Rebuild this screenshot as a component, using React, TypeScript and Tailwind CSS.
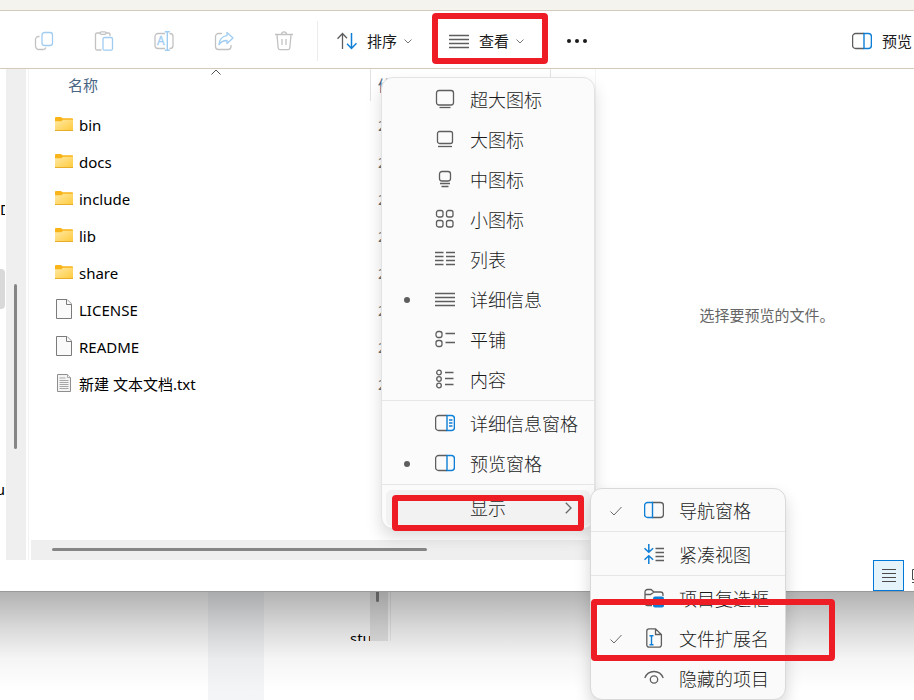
import { FC, ReactNode } from "react"

const GREY = "#5e5e5e"
const BLUE = "#0f7fd6"
const FAINT_GREY = "#c2c2c2"
const FAINT_BLUE = "#a0ccf1"

const Icon: FC<{ children: ReactNode }> = ({ children }) => (
	<svg
		viewBox="0 0 20 20"
		fill="none"
		stroke={GREY}
		strokeWidth="1.3"
		className="h-5 w-5 shrink-0"
		aria-hidden="true"
	>
		{children}
	</svg>
)

const CopyIcon = () => (
	<Icon>
		<path
			stroke={FAINT_GREY}
			d="M5.5 5.5h-1a3 3 0 0 0-3 3V15A3.5 3.5 0 0 0 5 18.5h4a3 3 0 0 0 3-2"
		/>
		<rect stroke={FAINT_BLUE} x="8" y="1.5" width="10.5" height="13" rx="2.5" />
	</Icon>
)

const PasteIcon = () => (
	<Icon>
		<path
			stroke={FAINT_GREY}
			d="M6 2H3a1.5 1.5 0 0 0-1.5 1.5v14A1.5 1.5 0 0 0 3 19h4.5M12 2h2.5A1.5 1.5 0 0 1 16 3.5V5"
		/>
		<rect stroke={FAINT_GREY} x="6" y=".8" width="6" height="2.6" rx="1.3" />
		<rect stroke={FAINT_BLUE} x="9" y="6.5" width="9.5" height="12.7" rx="1.5" />
	</Icon>
)

const RenameIcon = () => (
	<Icon>
		<path
			stroke={FAINT_GREY}
			d="M11 2.5H4a3 3 0 0 0-3 3v9a3 3 0 0 0 3 3h7M15.5 2.5h.5a3 3 0 0 1 3 3v9a3 3 0 0 1-3 3h-.5"
		/>
		<path stroke={FAINT_BLUE} strokeWidth="1.4" d="M13.3 1v18M10.8.8h5M10.8 19.2h5" />
		<text x="3" y="14" fontSize="12" fill={FAINT_BLUE} stroke={FAINT_BLUE} strokeWidth=".3">
			A
		</text>
	</Icon>
)

const ShareIcon = () => (
	<Icon>
		<path
			stroke={FAINT_GREY}
			d="M8 2.5H4.5a3 3 0 0 0-3 3v10a3 3 0 0 0 3 3H14a3 3 0 0 0 3-3V14"
		/>
		<path
			stroke={FAINT_BLUE}
			strokeLinejoin="round"
			d="M13 1.500l6 5.500-6 5.500V9.500c-4 0-6.500 1.500-8 4.300C5 9 8 5 13 4.700z"
		/>
	</Icon>
)

const TrashIcon = () => (
	<Icon>
		<path
			stroke={FAINT_GREY}
			d="M1 3.5h18M7.5 3.2c0-3 5-3 5 0M3 4l1.2 13A1.8 1.8 0 0 0 6 18.6h8a1.8 1.8 0 0 0 1.8-1.6L17 4M8 8v6M12 8v6"
		/>
	</Icon>
)

const SortIcon = () => (
	<Icon>
		<path d="M5.5 2.5V18M.5 7.8l5-5.300 4.500 4.700" />
		<path stroke={BLUE} strokeWidth="1.5" d="M14.5 2v15.5M10 12.8l4.500 4.700 5-5.300" />
	</Icon>
)

const LinesIcon = () => (
	<Icon>
		<path d="M0 4.5h20M0 8.5h20M0 12.5h20M0 16.5h20" />
	</Icon>
)

const PaneIcon: FC<{ detailed?: boolean }> = ({ detailed }) => (
	<Icon>
		<path d="M12 2.5H3.6a3 3 0 0 0-3 3v9a3 3 0 0 0 3 3H12" />
		<path stroke={BLUE} strokeWidth="1.4" d="M12 2.5h4.400a3 3 0 0 1 3 3v9a3 3 0 0 1-3 3H12z" />
		{detailed && <path stroke={BLUE} d="M14 7h3.500M14 10h3.500M14 13h3.500" />}
	</Icon>
)

const NavPaneIcon = () => (
	<Icon>
		<path d="M8 2.5h8.400a3 3 0 0 1 3 3v9a3 3 0 0 1-3 3H8" />
		<path stroke={BLUE} strokeWidth="1.4" d="M8.5 2.5H3.6a3 3 0 0 0-3 3v9a3 3 0 0 0 3 3h4.900z" />
	</Icon>
)

const ExtraLargeIcon = () => (
	<Icon>
		<rect x="1.5" y="1.5" width="17" height="14.5" rx="2.5" />
		<path d="M4.5 18.5h11" />
	</Icon>
)

const LargeIcon = () => (
	<Icon>
		<rect x="2.5" y="2.5" width="15" height="12" rx="2" />
		<path d="M3 17.500h14" />
	</Icon>
)

const MediumIcon = () => (
	<Icon>
		<rect x="4.5" y="2.5" width="11" height="9.5" rx="2.5" />
		<path d="M5 14.5h10M6.5 17.5h7" />
	</Icon>
)

const SmallIcon = () => (
	<Icon>
		<rect x="1.5" y="1.5" width="6.5" height="6.5" rx="2" />
		<rect x="11.5" y="1.5" width="6.5" height="6.5" rx="2" />
		<rect x="1.5" y="11.5" width="6.5" height="6.5" rx="2" />
		<rect x="11.5" y="11.5" width="6.5" height="6.5" rx="2" />
	</Icon>
)

const ListIcon = () => (
	<Icon>
		<path d="M0 3.5h8.500M11 3.5h9M0 7.5h8.500M11 7.5h9M0 11.5h8.500M11 11.5h9M0 15.5h8.500M11 15.5h9" />
	</Icon>
)

const TilesIcon = () => (
	<Icon>
		<rect x="1" y="2.5" width="6" height="6" rx="2.2" />
		<rect x="1" y="11.5" width="6" height="6" rx="2.2" />
		<path d="M10.5 4.5H20M10.5 13.5H20" />
	</Icon>
)

const ContentIcon = () => (
	<Icon>
		<circle cx="4" cy="3.5" r="2.3" />
		<circle cx="4" cy="10" r="2.3" />
		<circle cx="4" cy="16.5" r="2.3" />
		<path d="M10 3.500h8.500M10 9.500h8.500M10 15.500h8.500" />
	</Icon>
)

const CompactIcon = () => (
	<Icon>
		<path
			stroke={BLUE}
			strokeWidth="1.5"
			d="M4.8 0v8M.5 4.2l4.300 4 4.300-4M4.8 20v-8M.5 15.800l4.300-4 4.300 4"
		/>
		<path d="M11.5 4.5H20M11.5 8.5H20M11.5 12.5H20M11.5 16.5H20" />
	</Icon>
)

const CheckFolderIcon = () => (
	<Icon>
		<path d="M8 17.5H3.500A2.500 2.500 0 0 1 1 15V4a2.500 2.500 0 0 1 2.500-2.500H7L10 4h6.500A2.500 2.500 0 0 1 19 6.500V8M1 6.500h5.500L10 4" />
		<rect x="9" y="8.500" width="11" height="11" rx="2" fill={BLUE} stroke="none" />
		<path stroke="#fff" d="M11.5 14l2 2 4-4" />
	</Icon>
)

const ExtensionIcon = () => (
	<Icon>
		<path d="M11.5.8H5A2.2 2.2 0 0 0 2.8 3v14A2.2 2.2 0 0 0 5 19.2h10.200a2.200 2.200 0 0 0 2.200-2.200V6.500zM11.5.8v5.700h5.900" />
		<path stroke={BLUE} strokeWidth="1.4" d="M7.5 8v8.500M5.5 7.800h4M5.5 16.700h4" />
	</Icon>
)

const HiddenIcon = () => (
	<Icon>
		<path d="M.8 10C2.5 5.5 6 3.5 10 3.5s7.500 2 9.200 6.500" />
		<circle cx="10" cy="11.5" r="3.7" />
	</Icon>
)

const Chevron = () => (
	<svg viewBox="0 0 8 5" fill="none" stroke="#777" className="h-[5px] w-2" aria-hidden="true">
		<path d="M.5.5L4 4 7.5.5" />
	</svg>
)

const FolderIcon = () => (
	<svg viewBox="0 0 18 14" className="h-3.5 w-[18px]" aria-hidden="true">
		<defs>
			<linearGradient id="folder" x1="0" y1="0" x2="1" y2="1">
				<stop offset="0" stopColor="#ffe9a6" />
				<stop offset="1" stopColor="#ffca3a" />
			</linearGradient>
		</defs>
		<path d="M0 1a1 1 0 0 1 1-1h5l1.500 1.300H17a1 1 0 0 1 1 1V5H0z" fill="#f8b418" />
		<path d="M0 4.300h6.500L8 2.800h10V13a1 1 0 0 1-1 1H1a1 1 0 0 1-1-1z" fill="url(#folder)" />
		<path d="M0 13.500h18" stroke="#e9ad2c" />
	</svg>
)

const FileIcon = () => (
	<svg viewBox="0 0 16 20" fill="#fafafa" stroke="#7b7b7b" className="h-5 w-4" aria-hidden="true">
		<path d="M.5.5H11L15.5 5v14.500H.5z" />
		<path d="M10.5.5v5h5" />
	</svg>
)

const TextFileIcon = () => (
	<svg viewBox="0 0 16 20" fill="#f4f4f4" stroke="#8e8e8e" className="h-5 w-4" aria-hidden="true">
		<path d="M1.5 1.5h10l3 3v14h-13z" />
		<path
			stroke="#a8a8a8"
			d="M11.5 1.500v3h3M3.500 5h6M3.500 7.500h9M3.500 9.500h9M3.500 11.500h9M3.500 13.500h9M3.500 15.500h9"
		/>
	</svg>
)

const TOOLS = [
	{ label: "复制", icon: <CopyIcon /> },
	{ label: "粘贴", icon: <PasteIcon /> },
	{ label: "重命名", icon: <RenameIcon /> },
	{ label: "共享", icon: <ShareIcon /> },
	{ label: "删除", icon: <TrashIcon /> },
]

const FILES = [
	{ name: "bin", icon: <FolderIcon /> },
	{ name: "docs", icon: <FolderIcon /> },
	{ name: "include", icon: <FolderIcon /> },
	{ name: "lib", icon: <FolderIcon /> },
	{ name: "share", icon: <FolderIcon /> },
	{ name: "LICENSE", icon: <FileIcon /> },
	{ name: "README", icon: <FileIcon /> },
	{ name: "新建 文本文档.txt", icon: <TextFileIcon /> },
]

type MenuItemProps = {
	label: string
	icon?: ReactNode
	mark?: "dot" | "check"
	open?: boolean
	children?: ReactNode
}

const MenuItem: FC<MenuItemProps> = ({ label, icon, mark, open, children }) => (
	<li className="relative h-10 px-1 py-0.5">
		<button
			type="button"
			className={`flex h-9 w-full items-center rounded-md pr-[18px] pl-[15px] text-left ${open ? "bg-[#f2f2f2]" : ""}`}
		>
			<span className="flex w-3 shrink-0 justify-center">
				{mark === "dot" && <span className="h-1.5 w-1.5 rounded-full bg-[#5e5e5e]" />}
				{mark === "check" && (
					<svg viewBox="0 0 12 10" fill="none" stroke="#6a6a6a" className="h-2.5 w-3">
						<path d="M.5 5.500L4 9l7.500-8" />
					</svg>
				)}
			</span>
			<span className="mr-[15px] mb-0.5 ml-[22px] h-5 w-5 shrink-0">{icon}</span>
			<span className="whitespace-nowrap">{label}</span>
			{open && (
				<svg
					viewBox="0 0 7 12"
					fill="none"
					stroke="#666"
					strokeWidth="1.3"
					className="ml-auto h-3 w-[7px]"
				>
					<path d="M.8.8L6 6 .8 11.200" />
				</svg>
			)}
		</button>
		{children}
	</li>
)

const Separator = () => <li role="separator" className="mb-[3px] h-px bg-[#e6e6e6]" />

const ViewMenu = () => (
	<ul className="absolute top-[77px] left-[381px] z-10 w-[214px] rounded-xl border border-[#e2e3e5] bg-[#fbfbfc] pt-0.5 text-lg leading-6 font-light text-[#1b1b1b] shadow-[0_8px_16px_rgba(0,0,0,0.14)]">
		<MenuItem label="超大图标" icon={<ExtraLargeIcon />} />
		<MenuItem label="大图标" icon={<LargeIcon />} />
		<MenuItem label="中图标" icon={<MediumIcon />} />
		<MenuItem label="小图标" icon={<SmallIcon />} />
		<MenuItem label="列表" icon={<ListIcon />} />
		<MenuItem label="详细信息" icon={<LinesIcon />} mark="dot" />
		<MenuItem label="平铺" icon={<TilesIcon />} />
		<MenuItem label="内容" icon={<ContentIcon />} />
		<Separator />
		<MenuItem label="详细信息窗格" icon={<PaneIcon detailed />} />
		<MenuItem label="预览窗格" icon={<PaneIcon />} mark="dot" />
		<Separator />
		<MenuItem label="显示" open>
			<ul className="absolute top-0 left-[208px] w-[196px] rounded-xl border border-[#d9d9d9] bg-[#fafafa] pt-0.5 shadow-[0_8px_16px_rgba(0,0,0,0.16)]">
				<MenuItem label="导航窗格" icon={<NavPaneIcon />} mark="check" />
				<Separator />
				<MenuItem label="紧凑视图" icon={<CompactIcon />} />
				<Separator />
				<MenuItem label="项目复选框" icon={<CheckFolderIcon />} />
				<MenuItem label="文件扩展名" icon={<ExtensionIcon />} mark="check" />
				<MenuItem label="隐藏的项目" icon={<HiddenIcon />} />
			</ul>
		</MenuItem>
	</ul>
)

const Toolbar = () => (
	<header className="shrink-0 border-b border-[#d5cabb] bg-white">
		<div className="h-[11px] border-b border-[#d5cabb] bg-[#f5f3ee]" />
		<div className="flex h-[57px] items-center pt-[3px] pr-0.5 pl-6 text-[15px] leading-5 text-[#1b1b1b]">
			<div className="flex gap-5">
				{TOOLS.map((tool) => (
					<button
						key={tool.label}
						type="button"
						disabled
						aria-label={tool.label}
						className="flex w-10 justify-center"
					>
						{tool.icon}
					</button>
				))}
			</div>
			<div className="ml-[13px] h-10 w-px bg-[#ececec]" />
			<button type="button" className="ml-[19px] flex items-center">
				<SortIcon />
				<span className="mr-[7px] ml-2.5">排序</span>
				<Chevron />
			</button>
			<button type="button" className="ml-[37px] flex items-center">
				<LinesIcon />
				<span className="mr-[7px] ml-2.5">查看</span>
				<Chevron />
			</button>
			<button type="button" aria-label="更多" className="ml-[43px] flex gap-1">
				<span className="h-1 w-1 rounded-full bg-[#1b1b1b]" />
				<span className="h-1 w-1 rounded-full bg-[#1b1b1b]" />
				<span className="h-1 w-1 rounded-full bg-[#1b1b1b]" />
			</button>
			<button type="button" className="ml-auto flex items-center gap-2.5">
				<PaneIcon />
				<span>预览</span>
			</button>
		</div>
	</header>
)

const NavEdge = () => (
	<nav className="flex shrink-0 border-r border-[#f3f3f3] pr-0.5 text-[15px] leading-5">
		<div className="mr-px w-[5px] overflow-hidden pt-[130px]">
			<p>D</p>
			<div className="mt-[50px] h-10 rounded-r-sm bg-[#d9d9d9]" />
			<p className="mt-[170px] flex justify-end">u</p>
		</div>
		<div className="w-5 bg-[#efefef] pt-[215px] pl-2">
			<div className="h-[165px] w-[3px] rounded-full bg-[#868686]" />
		</div>
	</nav>
)

const FileList = () => (
	<section className="ml-0.5 flex w-[564px] shrink-0 flex-col">
		<table className="w-full table-fixed text-left text-[15px] leading-5">
			<colgroup>
				<col className="w-[339px]" />
				<col className="w-[180px]" />
				<col />
			</colgroup>
			<thead>
				<tr className="h-[37px] text-[#4a6484]">
					<th className="relative p-0 pl-[37px] align-top font-normal">
						<svg
							viewBox="0 0 10 6"
							fill="none"
							stroke="#555"
							className="absolute top-0 left-[180px] h-1.5 w-2.5"
						>
							<path d="M.5 5.500L5 1l4.500 4.500" />
						</svg>
						<div className="pt-1.5">名称</div>
					</th>
					<th className="p-0 align-top font-normal">
						<div className="h-8 border-l border-[#e2e2e2] pt-1.5 pl-[7px]">修改日期</div>
					</th>
					<th className="p-0 align-top font-normal">
						<div className="h-8 border-l border-[#e2e2e2]" />
					</th>
				</tr>
			</thead>
			<tbody>
				{FILES.map((file) => (
					<tr key={file.name} className="h-[37px]">
						<td className="p-0 pl-6">
							<div className="flex items-center gap-1.5">
								<span className="flex w-[18px] justify-center pb-0.5">{file.icon}</span>
								<span>{file.name}</span>
							</div>
						</td>
						<td className="p-0 pl-2 text-[#6d6d6d]">2</td>
						<td className="p-0" />
					</tr>
				))}
			</tbody>
		</table>
		<div className="mt-auto h-5 bg-[#efefef] pt-2 pl-[21px]">
			<div className="h-[3px] w-[375px] rounded-full bg-[#868686]" />
		</div>
	</section>
)

const StatusBar = () => (
	<footer className="flex h-8 shrink-0 justify-end overflow-hidden border-b border-[#9a9a9a] bg-white">
		<button
			type="button"
			aria-label="详细信息视图"
			className="flex w-[31px] items-center justify-center border border-[#0078d7] bg-[#e5f3fb]"
		>
			<svg viewBox="0 0 14 14" stroke="#4a4a4a" className="h-3.5 w-3.5">
				<path d="M0 .5h14M0 4.500h14M0 8.500h14M0 12.500h14" />
			</svg>
		</button>
		<button type="button" aria-label="缩略图视图" className="flex w-2.5 items-center overflow-hidden pl-2">
			<svg viewBox="0 0 14 14" fill="none" stroke="#4a4a4a" className="h-3.5 w-3.5 shrink-0">
				<path d="M.5.5h13v10H.5zM0 13.500h14" />
			</svg>
		</button>
	</footer>
)

// window behind the explorer, darkened by its drop shadow
const Backdrop = () => (
	<div className="relative flex h-[108px] shrink-0 overflow-hidden bg-white">
		<div className="ml-[208px] w-14 bg-[#f3f5f7]" />
		<div className="ml-[86px] flex h-[49px] overflow-hidden border-r border-[#eee] pr-0.5 text-[15px] leading-5">
			<span className="w-5 overflow-hidden pt-9">stu</span>
			<span className="w-[18px] bg-[#e8e8e8] pl-1.5">
				<span className="block h-2.5 w-[3px] rounded-b-full bg-[#868686]" />
			</span>
		</div>
		<div className="absolute inset-0 bg-[linear-gradient(to_bottom,rgba(0,0,0,0.3),rgba(0,0,0,0.15)_33%,rgba(0,0,0,0.04)_62%,transparent_92%)]" />
	</div>
)

const App: FC = () => (
	<div className="relative flex min-h-screen flex-col overflow-hidden bg-white font-['Noto_Sans','Noto_Sans_CJK_SC',sans-serif] text-black">
		<Toolbar />
		<main className="flex flex-1">
			<NavEdge />
			<FileList />
			<aside className="flex flex-1 items-center justify-center border-l border-[#f5f5f5] pl-6 text-[15px] leading-5 text-[#666]">
				选择要预览的文件。
			</aside>
		</main>
		<StatusBar />
		<Backdrop />
		<ViewMenu />
		<div className="absolute top-[13px] left-[432px] z-20 h-[51px] w-[116px] rounded-sm border-6 border-[#ee1c24]" />
		<div className="absolute top-[495px] left-[392px] z-20 h-9 w-48 rounded-sm border-6 border-[#ee1c24]" />
		<div className="absolute top-[599px] left-[591px] z-20 h-[62px] w-[244px] rounded-sm border-6 border-[#ee1c24]" />
	</div>
)

export default App
